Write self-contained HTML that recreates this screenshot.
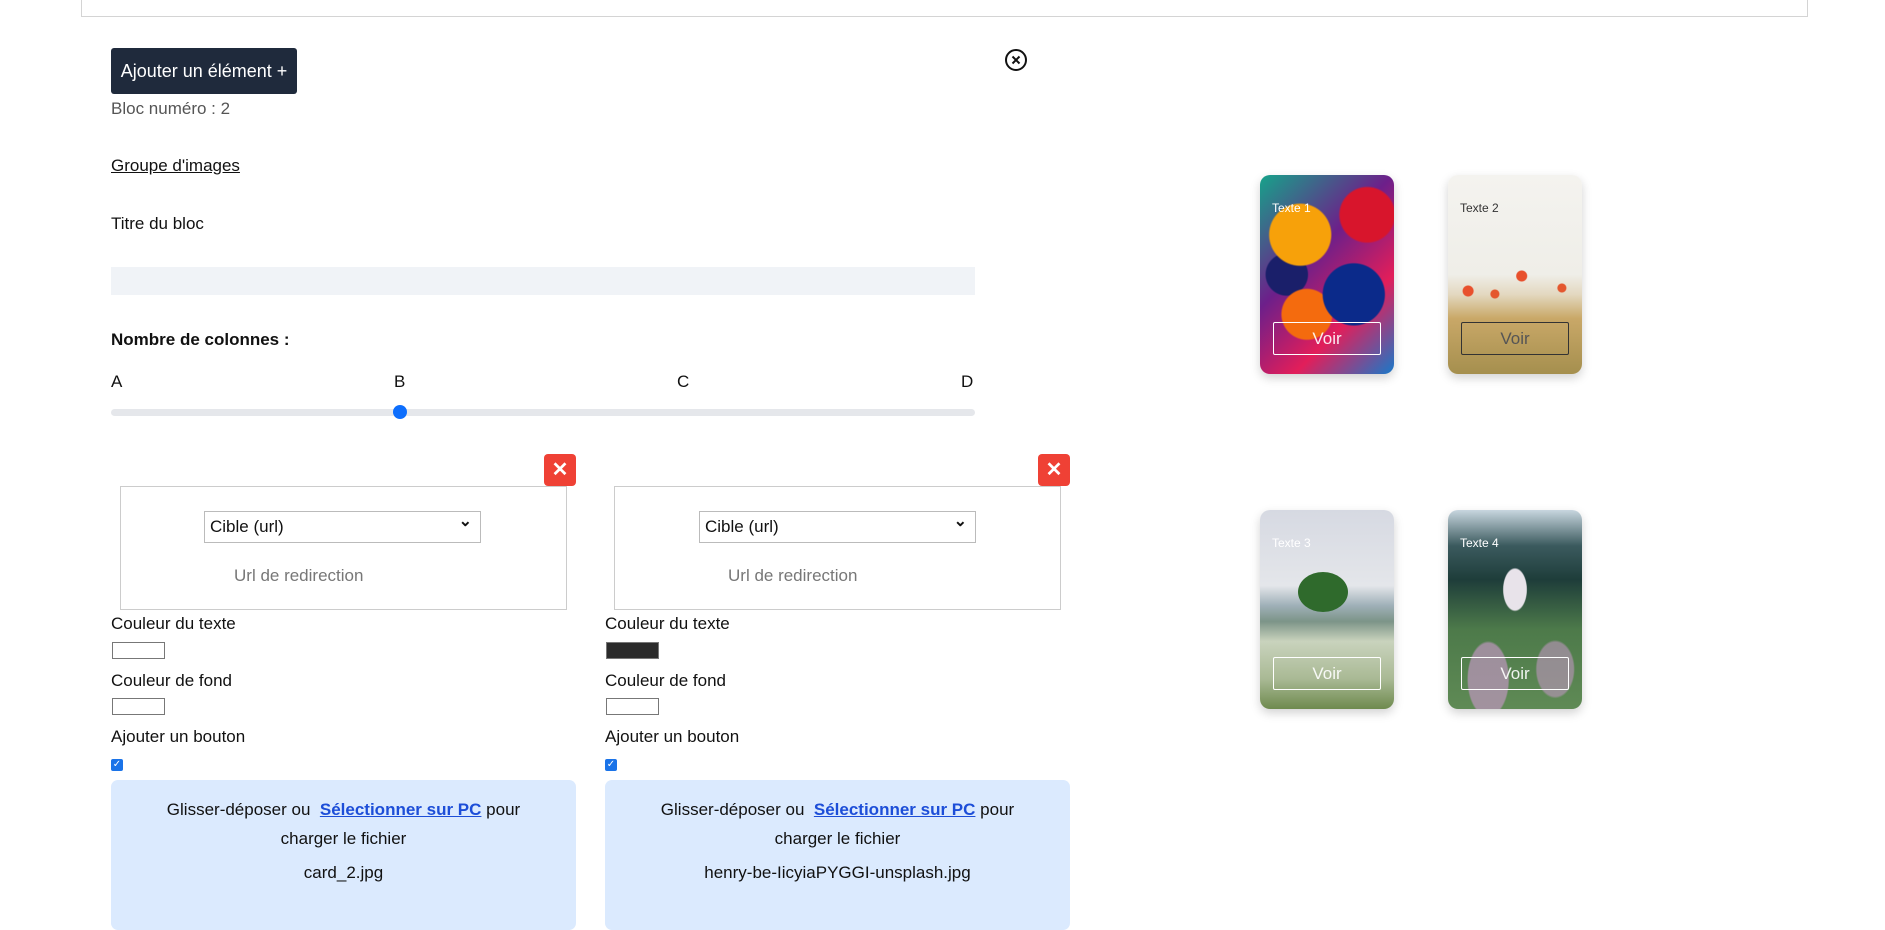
<!DOCTYPE html>
<html><head><meta charset="utf-8"><style>
*{box-sizing:border-box;margin:0;padding:0}
body{width:1885px;height:900px;overflow:hidden;background:#fff;font-family:"Liberation Sans",Arial,sans-serif;color:#111;position:relative}
.a{position:absolute}
.t{font-size:17px;line-height:20px}
.top{left:81px;top:-2px;width:1727px;height:19px;border:1px solid #d4d4d4;border-top:none}
.btn{left:111px;top:48px;width:186px;height:46px;background:#1f2a3c;color:#fff;border-radius:3px;font-size:18px;line-height:46px;text-align:center}
.box{border:1px solid #ccc}
.sel{border:1px solid #bbb;font-size:17px;line-height:30px;padding-left:5px;color:#111}
.sel:after{content:"⌄";position:absolute;right:8px;top:-5px;font-size:16px;font-weight:bold}
.xb{width:32px;height:32px;background:#ef4135;border-radius:4px;color:#fff;font-size:20px;line-height:32px;text-align:center;font-weight:bold}
.sw{width:53px;height:17px;border:1px solid #777}
.cb{width:12px;height:12px;background:#1a73e8;border-radius:2px;color:#fff;font-size:10px;line-height:12px;text-align:center}
.up{width:465px;height:150px;background:#dbeafe;border-radius:7px;text-align:center;font-size:17px}
.up a{color:#1d4ed8;font-weight:bold;text-decoration:underline}
.card{width:134px;height:199px;border-radius:10px;overflow:hidden;box-shadow:0 4px 10px rgba(0,0,0,.18)}
.card .lb{position:absolute;left:12px;top:26px;font-size:12px;color:#fff}
.card .v{position:absolute;left:13px;top:147px;width:108px;height:33px;border:1px solid #fff;border-radius:2px;color:rgba(255,255,255,.9);font-size:17px;line-height:31px;text-align:center}
</style></head><body>
<div class="a top"></div>
<div class="a btn">Ajouter un élément +</div>
<svg class="a" style="left:1004px;top:48px" width="24" height="24" viewBox="0 0 24 24"><circle cx="12" cy="12" r="10" fill="none" stroke="#111" stroke-width="2"/><path d="M8.5 8.5l7 7M15.5 8.5l-7 7" stroke="#111" stroke-width="2"/></svg>
<div class="a t" style="left:111px;top:99px;color:#555">Bloc numéro : 2</div>
<div class="a t" style="left:111px;top:156px;text-decoration:underline">Groupe d'images</div>
<div class="a t" style="left:111px;top:214px">Titre du bloc</div>
<div class="a" style="left:111px;top:267px;width:864px;height:28px;background:#f0f3f7"></div>
<div class="a t" style="left:111px;top:330px;font-weight:bold">Nombre de colonnes :</div>
<div class="a t" style="left:111px;top:372px">A</div>
<div class="a t" style="left:394px;top:372px">B</div>
<div class="a t" style="left:677px;top:372px">C</div>
<div class="a t" style="left:961px;top:372px">D</div>
<div class="a" style="left:111px;top:409px;width:864px;height:7px;background:#e5e7eb;border-radius:4px"></div>
<div class="a" style="left:393px;top:405px;width:14px;height:14px;background:#0d6efd;border-radius:50%"></div>

<div class="a xb" style="left:544px;top:454px">✕</div>
<div class="a box" style="left:120px;top:486px;width:447px;height:124px"></div>
<div class="a sel" style="left:204px;top:511px;width:277px;height:32px">Cible (url)</div>
<div class="a t" style="left:234px;top:566px;color:#777">Url de redirection</div>
<div class="a t" style="left:111px;top:614px">Couleur du texte</div>
<div class="a sw" style="left:112px;top:642px;background:#fff"></div>
<div class="a t" style="left:111px;top:671px">Couleur de fond</div>
<div class="a sw" style="left:112px;top:698px;background:#fff"></div>
<div class="a t" style="left:111px;top:727px">Ajouter un bouton</div>
<div class="a cb" style="left:111px;top:759px">✓</div>
<div class="a up" style="left:111px;top:780px"><div style="margin-top:15px;line-height:29px">Glisser-déposer ou &nbsp;<a>Sélectionner sur PC</a> pour<br>charger le fichier</div><div style="margin-top:10px">card_2.jpg</div></div>

<div class="a xb" style="left:1038px;top:454px">✕</div>
<div class="a box" style="left:614px;top:486px;width:447px;height:124px"></div>
<div class="a sel" style="left:699px;top:511px;width:277px;height:32px">Cible (url)</div>
<div class="a t" style="left:728px;top:566px;color:#777">Url de redirection</div>
<div class="a t" style="left:605px;top:614px">Couleur du texte</div>
<div class="a sw" style="left:606px;top:642px;background:#2b2b2b"></div>
<div class="a t" style="left:605px;top:671px">Couleur de fond</div>
<div class="a sw" style="left:606px;top:698px;background:#fff"></div>
<div class="a t" style="left:605px;top:727px">Ajouter un bouton</div>
<div class="a cb" style="left:605px;top:759px">✓</div>
<div class="a up" style="left:605px;top:780px"><div style="margin-top:15px;line-height:29px">Glisser-déposer ou &nbsp;<a>Sélectionner sur PC</a> pour<br>charger le fichier</div><div style="margin-top:10px">henry-be-IicyiaPYGGI-unsplash.jpg</div></div>

<div class="a card" style="left:1260px;top:175px;background:radial-gradient(circle at 30% 30%,#f7a10a 0 18%,transparent 19%),radial-gradient(circle at 70% 60%,#0b2a8a 0 20%,transparent 21%),radial-gradient(circle at 35% 70%,#f46b0e 0 15%,transparent 16%),radial-gradient(circle at 80% 20%,#d8152c 0 14%,transparent 15%),radial-gradient(circle at 20% 50%,#1a1f6a 0 14%,transparent 15%),linear-gradient(135deg,#16a38a,#6d1f8a 40%,#e21e5a 70%,#1979c9)">
<div class="lb">Texte 1</div><div class="v">Voir</div></div>
<div class="a card" style="left:1448px;top:175px;background:linear-gradient(180deg,#f4f3ef 0,#efeee8 50%,#e3d8c0 60%,#c9a868 72%,#a58f4e 100%)">
<div style="position:absolute;left:0;top:95px;width:134px;height:30px;background:radial-gradient(circle at 15% 70%,#e8502c 0 5px,transparent 6px),radial-gradient(circle at 55% 20%,#e8502c 0 5px,transparent 6px),radial-gradient(circle at 85% 60%,#e4572e 0 4px,transparent 5px),radial-gradient(circle at 35% 80%,#e4572e 0 4px,transparent 5px)"></div>
<div class="lb" style="color:#333">Texte 2</div><div class="v" style="border-color:#333;color:#555">Voir</div></div>
<div class="a card" style="left:1260px;top:510px;background:linear-gradient(180deg,#d6d9e2 0,#e4e6ea 38%,#9fb0b8 48%,#7c9488 56%,#c9d3bd 66%,#a9b994 85%,#6e8a4e 100%)">
<div style="position:absolute;left:38px;top:62px;width:50px;height:40px;border-radius:50%;background:#2f6a2c"></div>
<div class="lb">Texte 3</div><div class="v">Voir</div></div>
<div class="a card" style="left:1448px;top:510px;background:radial-gradient(ellipse at 50% 40%,#e8e3ea 0 12%,transparent 13%),radial-gradient(ellipse at 30% 85%,rgba(190,150,190,.7) 0 15%,transparent 16%),radial-gradient(ellipse at 80% 80%,rgba(190,150,190,.6) 0 12%,transparent 13%),linear-gradient(180deg,#c8d6df 0,#3b5a5e 18%,#1e3d3a 35%,#4d7a4a 60%,#5f8a55 100%)">
<div class="lb">Texte 4</div><div class="v">Voir</div></div>
</body></html>
